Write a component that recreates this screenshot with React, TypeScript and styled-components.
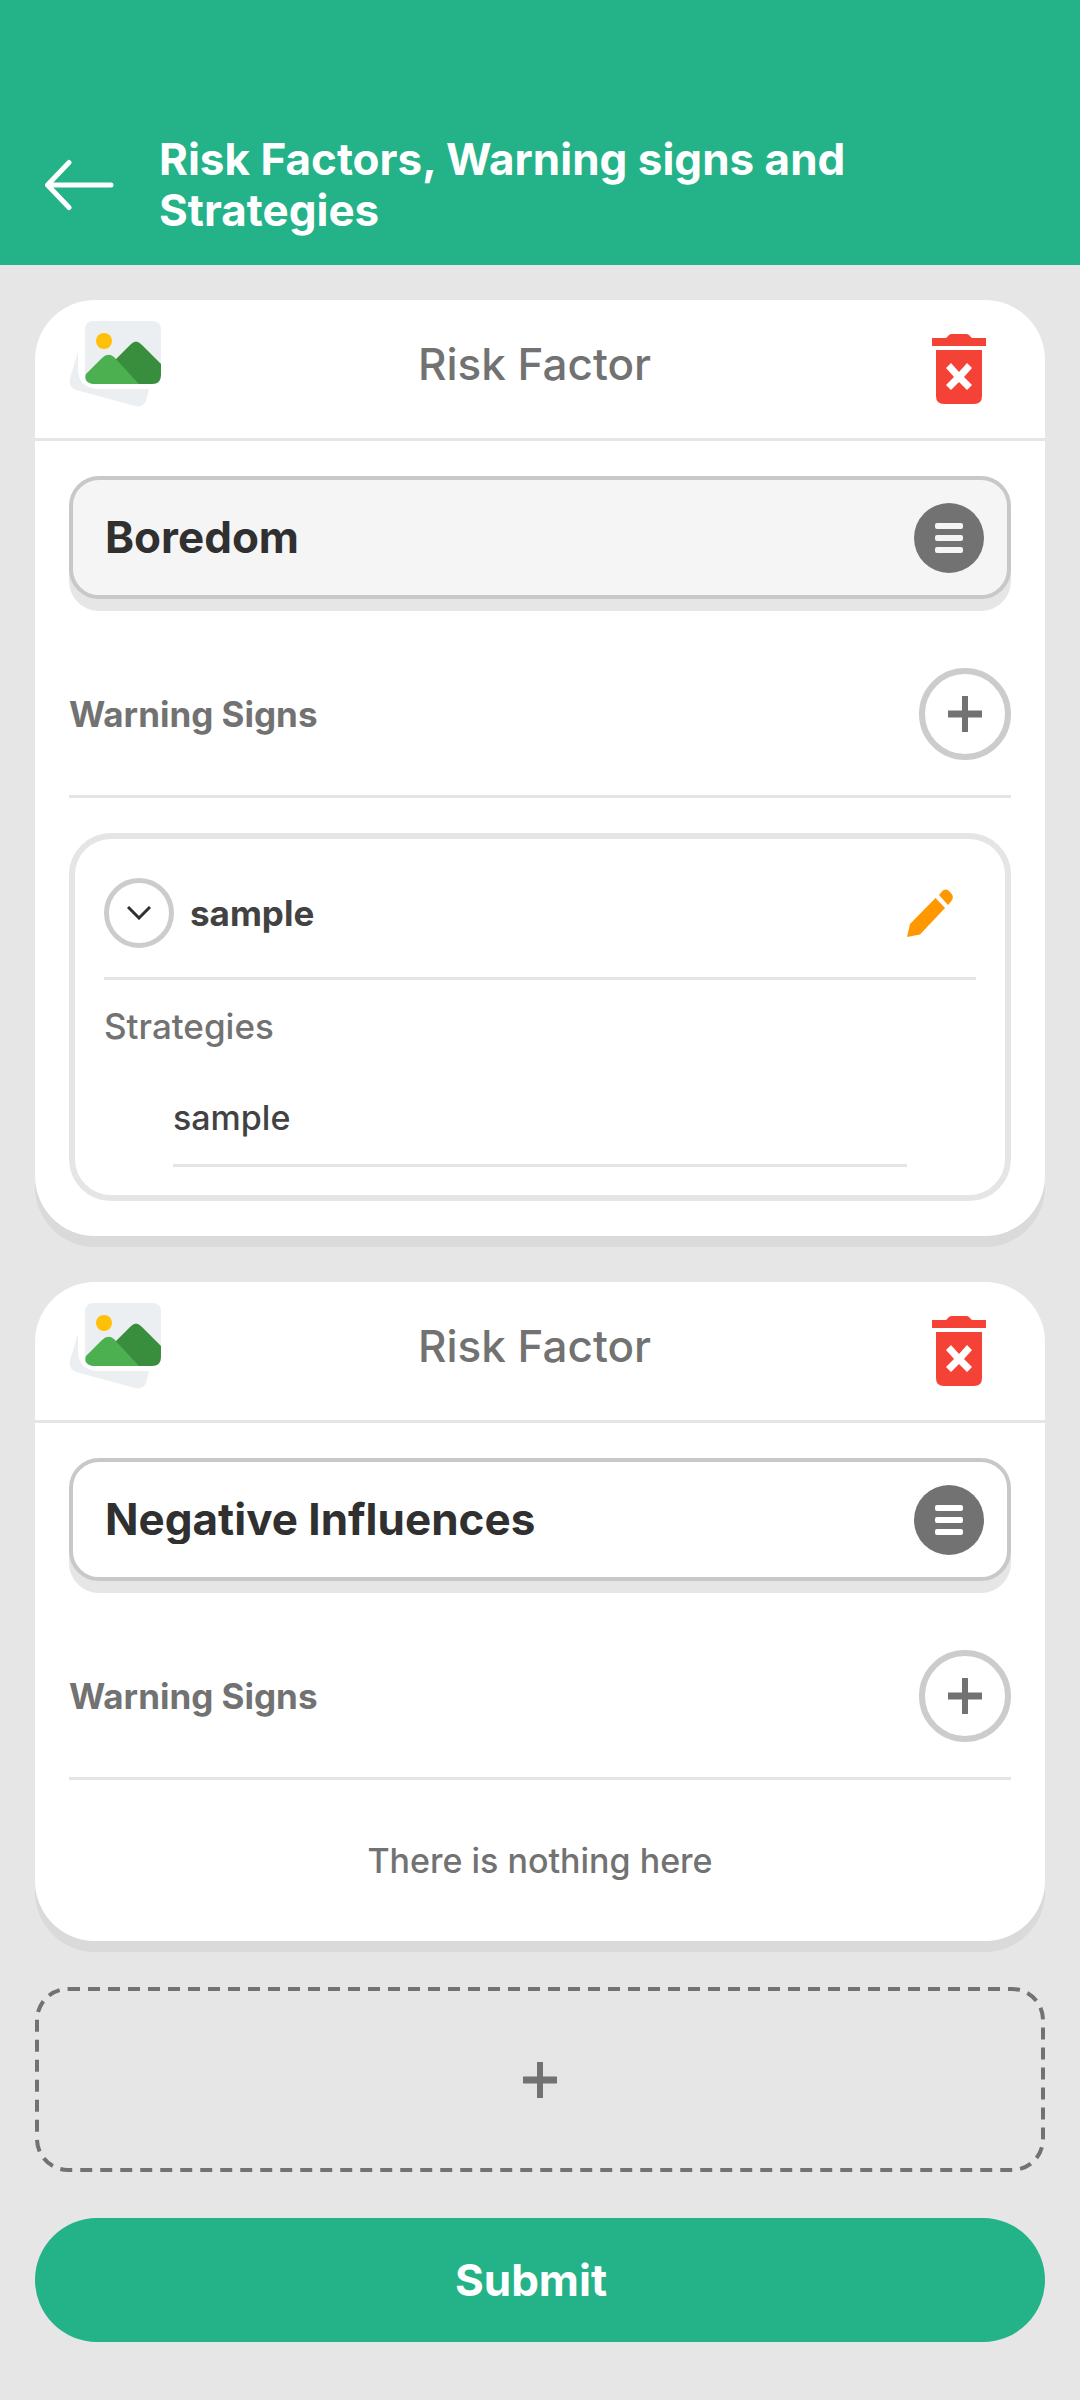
import React, { useState } from "react";
import styled, { createGlobalStyle } from "styled-components";

const green = "#24b288";
const grey = "#727272";
const line = "#e5e5e5";
const ring = "#cccccc";

const GlobalStyle = createGlobalStyle`
  *, *::before, *::after { box-sizing: border-box; }
  body { margin: 0; background: #e6e6e6; }
  body, button, input { font-family: Inter, "Liberation Sans", sans-serif; }
  h1, h2, h3, h4, p, ul { margin: 0; padding: 0; }
  button { padding: 0; border: 0; background: none; color: inherit; cursor: pointer; }
  svg { display: block; }
`;

const Header = styled.header`
  display: flex;
  align-items: center;
  gap: 44px;
  min-height: 265px;
  padding: 105px 44px 0;
  background: ${green};
  color: #ffffff;
`;

const BackButton = styled.button`
  flex: none;
`;

const PageTitle = styled.h1`
  max-width: 760px;
  font-size: 44px;
  line-height: 51px;
  font-weight: 700;
`;

const Content = styled.main`
  display: flex;
  flex-direction: column;
  gap: 46px;
  padding: 35px 35px 58px;
`;

const Card = styled.section`
  border-radius: 60px;
  background: #ffffff;
  box-shadow: 0 11px 0 #dadada;
`;

const CardHeader = styled.div`
  display: grid;
  grid-template-columns: 92px 1fr 54px;
  align-items: center;
  height: 141px;
  padding: 0 59px 0 34px;
  border-bottom: 3px solid ${line};
`;

const Pictures = styled.svg`
  margin-bottom: 10px;
`;

const CardTitle = styled.h2`
  padding: 0 24px 10px 0;
  color: ${grey};
  font-size: 44px;
  line-height: 50px;
  font-weight: 500;
  text-align: center;
`;

const CardBody = styled.div`
  display: flex;
  flex-direction: column;
  padding: 35px 34px;
`;

const Field = styled.div<{ $filled: boolean }>`
  display: flex;
  align-items: center;
  height: 123px;
  margin-bottom: 34px;
  padding: 0 23px 0 32px;
  border: 4px solid #c8c8c8;
  border-radius: 30px;
  background: ${(p) => (p.$filled ? "#f5f5f5" : "#ffffff")};
  box-shadow: 0 12px 0 #e6e6e6;
`;

const FieldInput = styled.input`
  flex: 1;
  min-width: 0;
  padding: 0 0 2px;
  border: 0;
  outline: 0;
  background: none;
  color: #303030;
  font-size: 44px;
  line-height: 50px;
  font-weight: 700;
`;

const SectionRow = styled.div`
  display: flex;
  align-items: center;
  justify-content: space-between;
  height: 165px;
  border-bottom: 3px solid ${line};
`;

const SectionTitle = styled.h3`
  color: ${grey};
  font-size: 35px;
  line-height: 40px;
  font-weight: 700;
`;

const RoundButton = styled.button<{ $size: number; $border: number }>`
  display: grid;
  flex: none;
  place-items: center;
  width: ${(p) => p.$size}px;
  height: ${(p) => p.$size}px;
  border: ${(p) => p.$border}px solid ${ring};
  border-radius: 50%;
`;

const SignCard = styled.article`
  margin-top: 35px;
  padding: 0 29px 28px;
  border: 6px solid ${line};
  border-radius: 42px;
`;

const SignRow = styled.div`
  display: flex;
  align-items: center;
  gap: 16px;
  height: 141px;
  padding: 10px 23px 0 0;
  border-bottom: 3px solid ${line};
`;

const SignTitle = styled.h4`
  flex: 1;
  color: #424242;
  font-size: 35px;
  line-height: 40px;
  font-weight: 700;
`;

const StrategiesTitle = styled.h4`
  padding-top: 26px;
  color: ${grey};
  font-size: 35px;
  line-height: 40px;
  font-weight: 500;
`;

const StrategyList = styled.ul`
  list-style: none;
  padding: 0 69px;
`;

const Strategy = styled.li`
  padding: 52px 0 26px;
  border-bottom: 3px solid ${line};
  color: #424242;
  font-size: 34px;
  line-height: 40px;
  font-weight: 500;
`;

const Empty = styled.p`
  padding: 61px 0 25px;
  color: ${grey};
  font-size: 34px;
  line-height: 40px;
  font-weight: 500;
  text-align: center;
`;

const AddCard = styled.button`
  position: relative;
  display: grid;
  place-items: center;
  height: 185px;
`;

const DashedOutline = styled.svg`
  position: absolute;
  inset: 0;
  width: 100%;
  height: 100%;

  rect {
    width: calc(100% - 4px);
    height: calc(100% - 4px);
  }
`;

const Submit = styled.button`
  height: 124px;
  padding-right: 18px;
  border-radius: 62px;
  background: ${green};
  color: #ffffff;
  font-size: 44px;
  line-height: 50px;
  font-weight: 700;
`;

const BackIcon = () => (
  <svg width="71" height="52" viewBox="0 0 71 52" fill="none" stroke="#fff" strokeWidth="5" strokeLinecap="round" strokeLinejoin="round" aria-hidden="true">
    <path d="M67 26H4M25 3.500L3.500 26L25 48.500" />
  </svg>
);

const PicturesIcon = () => (
  <Pictures width="92" height="86" viewBox="0 0 92 86" aria-hidden="true">
    <path d="M9 31L1 57Q-1 66 7 69L66 85Q74 87 77 80L80 68H28Q9 66 9 48Z" fill="#eceff1" />
    <rect x="16" y="0" width="76" height="63" rx="8" fill="#eceff1" />
    <circle cx="35" cy="20" r="8" fill="#ffc107" />
    <path d="M46 39L61 24Q67 17 73 24L92 43V54Q92 63 83 63H66Z" fill="#388e3c" />
    <path d="M17 53L33 37Q39 31 45 36L70 63H24Q14 61 17 53Z" fill="#4caf50" />
  </Pictures>
);

const TrashIcon = () => (
  <svg width="54" height="70" viewBox="0 0 54 70" fill="#f44336" aria-hidden="true">
    <path d="M0 4H14L17 1Q18 0 20 0H34Q36 0 37 1L40 4H54V12H0Z" />
    <path fillRule="evenodd" d="M4 16H50V62Q50 70 42 70H12Q4 70 4 62ZM19 29L14 34L22 43L14 51L19 56L27 48L35 56L40 51L32 43L40 34L35 29L27 38Z" />
  </svg>
);

const MenuIcon = ({ bars }: { bars: string }) => (
  <svg width="70" height="70" viewBox="0 0 70 70" aria-hidden="true">
    <circle cx="35" cy="35" r="35" fill="#727272" />
    <g fill={bars}>
      <rect x="21" y="20" width="28" height="6" rx="2" />
      <rect x="21" y="32" width="28" height="6" rx="2" />
      <rect x="21" y="44" width="28" height="6" rx="2" />
    </g>
  </svg>
);

const PlusIcon = () => (
  <svg width="34" height="36" viewBox="0 0 34 36" fill="#727272" aria-hidden="true">
    <path d="M14 0H20V14.500H34V21.500H20V36H14V21.500H0V14.500H14Z" />
  </svg>
);

const ChevronIcon = ({ open }: { open: boolean }) => (
  <svg width="24" height="14" viewBox="0 0 24 14" fill="none" stroke="#303030" strokeWidth="3" aria-hidden="true">
    <path d={open ? "M1 1L12 12L23 1" : "M1 13L12 2L23 13"} />
  </svg>
);

const PencilIcon = () => (
  <svg width="46" height="48" viewBox="0 0 46 48" fill="#ff9800" aria-hidden="true">
    <path d="M32 6L34.500 3Q39 -2 43.500 3.500Q48 8 44 12.500L41 16Z" />
    <path d="M28.500 9L38 19L13 45.500L0 48L3 35Z" />
  </svg>
);

type Sign = { name: string; strategies: string[] };
type Risk = { id: string; name: string; filled: boolean; signs: Sign[] };

const risks: Risk[] = [
  { id: "risk-1", name: "Boredom", filled: true, signs: [{ name: "sample", strategies: ["sample"] }] },
  { id: "risk-2", name: "Negative Influences", filled: false, signs: [] },
];

function WarningSign({ sign }: { sign: Sign }) {
  const [open, setOpen] = useState(true);
  return (
    <SignCard>
      <SignRow>
        <RoundButton type="button" $size={70} $border={5} aria-label="Toggle strategies" aria-expanded={open} onClick={() => setOpen(!open)}>
          <ChevronIcon open={open} />
        </RoundButton>
        <SignTitle>{sign.name}</SignTitle>
        <button type="button" aria-label="Edit warning sign">
          <PencilIcon />
        </button>
      </SignRow>
      {open && (
        <>
          <StrategiesTitle>Strategies</StrategiesTitle>
          <StrategyList>
            {sign.strategies.map((s) => (
              <Strategy key={s}>{s}</Strategy>
            ))}
          </StrategyList>
        </>
      )}
    </SignCard>
  );
}

function RiskCard({ risk }: { risk: Risk }) {
  return (
    <Card>
      <CardHeader>
        <PicturesIcon />
        <CardTitle>
          <label htmlFor={risk.id}>Risk Factor</label>
        </CardTitle>
        <button type="button" aria-label="Delete risk factor">
          <TrashIcon />
        </button>
      </CardHeader>
      <CardBody>
        <Field $filled={risk.filled}>
          <FieldInput id={risk.id} type="text" defaultValue={risk.name} />
          <button type="button" aria-label="Choose from list">
            <MenuIcon bars={risk.filled ? "#f5f5f5" : "#ffffff"} />
          </button>
        </Field>
        <SectionRow>
          <SectionTitle>Warning Signs</SectionTitle>
          <RoundButton type="button" $size={92} $border={6} aria-label="Add warning sign">
            <PlusIcon />
          </RoundButton>
        </SectionRow>
        {risk.signs.map((s) => (
          <WarningSign key={s.name} sign={s} />
        ))}
        {risk.signs.length === 0 && <Empty>There is nothing here</Empty>}
      </CardBody>
    </Card>
  );
}

export default function App() {
  return (
    <>
      <GlobalStyle />
      <Header>
        <BackButton type="button" aria-label="Back">
          <BackIcon />
        </BackButton>
        <PageTitle>Risk Factors, Warning signs and Strategies</PageTitle>
      </Header>
      <Content>
        {risks.map((r) => (
          <RiskCard key={r.id} risk={r} />
        ))}
        <AddCard type="button" aria-label="Add risk factor">
          <DashedOutline aria-hidden="true">
            <rect x="2" y="2" rx="31" fill="none" stroke="#727272" strokeWidth="4" strokeDasharray="12 8" />
          </DashedOutline>
          <PlusIcon />
        </AddCard>
        <Submit type="button">Submit</Submit>
      </Content>
    </>
  );
}
